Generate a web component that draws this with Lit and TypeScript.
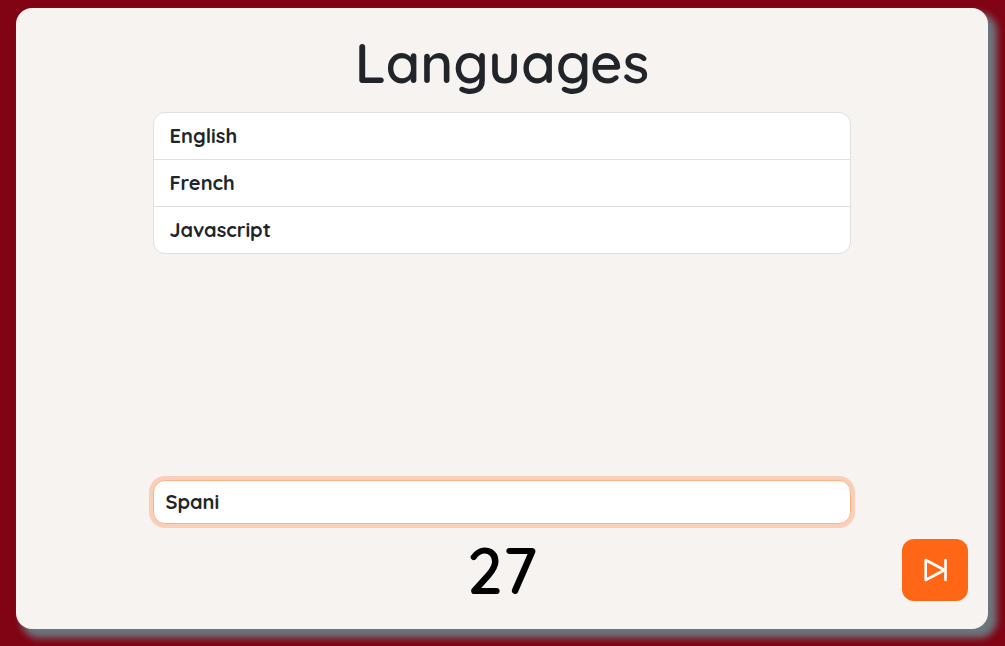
import { LitElement, html, css } from "lit";
import { customElement, state } from "lit/decorators.js";

@customElement("app-root")
export class AppRoot extends LitElement {
  @state() private answers = ["English", "French", "Javascript"];
  @state() private draft = "Spani";
  @state() private seconds = 27;

  static styles = css`
    :host {
      display: flex;
      box-sizing: border-box;
      min-height: 100vh;
      padding: 8px 17px 17px 16px;
      background: #800413;
      color: #212529;
      font-family: Quicksand, Inter, sans-serif;
      font-weight: 700;
    }
    * {
      box-sizing: border-box;
    }
    .card {
      flex: 1;
      display: flex;
      flex-direction: column;
      align-items: center;
      padding: 20px 0 13px;
      border-radius: 16px;
      background: #f6f3f0;
      box-shadow: 7px 7px 7px 2px #6c757d;
    }
    .title {
      margin: 0 0 16px;
      font-size: 56px;
      line-height: 68px;
      font-weight: 600;
    }
    .answers {
      width: 71.9%;
      margin: 0 0 auto;
      padding: 0;
      list-style: none;
      border: 1px solid #dedfe0;
      border-radius: 12px;
      background: #fff;
      overflow: hidden;
      font-size: 20px;
      line-height: 30px;
    }
    .answer {
      padding: 8px 16px;
    }
    .answer + .answer {
      border-top: 1px solid #dedfe0;
    }
    .entry {
      width: 71.9%;
      height: 44px;
      padding: 5px 12px 7px;
      border: 1px solid #ffb28a;
      border-radius: 12px;
      outline: none;
      background: #fff;
      box-shadow: 0 0 0 4px #f9cfb9;
      color: inherit;
      font: inherit;
      font-size: 20px;
      line-height: 30px;
    }
    .footer {
      width: 100%;
      display: grid;
      grid-template-columns: 1fr auto 1fr;
      padding: 0 20px;
    }
    .timer {
      grid-column: 2;
      color: #000;
      font-size: 64px;
      line-height: 92px;
      font-weight: 600;
    }
    .skip {
      grid-column: 3;
      justify-self: end;
      align-self: end;
      display: flex;
      align-items: center;
      justify-content: center;
      width: 66px;
      height: 62px;
      margin-bottom: 15px;
      padding: 0;
      border: 0;
      border-radius: 12px;
      background: #ff6616;
      color: #fff;
      cursor: pointer;
    }
  `;

  render() {
    return html`
      <main class="card">
        <h1 class="title">Languages</h1>
        <ul class="answers">
          ${this.answers.map((a) => html`<li class="answer">${a}</li>`)}
        </ul>
        <input
          class="entry"
          type="text"
          aria-label="Your answer"
          .value=${this.draft}
          @input=${(e: Event) => (this.draft = (e.target as HTMLInputElement).value)}
        />
        <div class="footer">
          <div class="timer" role="timer">${this.seconds}</div>
          <button class="skip" type="button" aria-label="Skip">
            <svg width="24" height="24" viewBox="0 0 24 24" fill="none" stroke="currentColor"
              stroke-width="2.6" stroke-linecap="round" stroke-linejoin="round" aria-hidden="true">
              <path d="M2.7 2v20L21.5 12z" />
              <path d="M22.5 2v20" />
            </svg>
          </button>
        </div>
      </main>
    `;
  }
}
